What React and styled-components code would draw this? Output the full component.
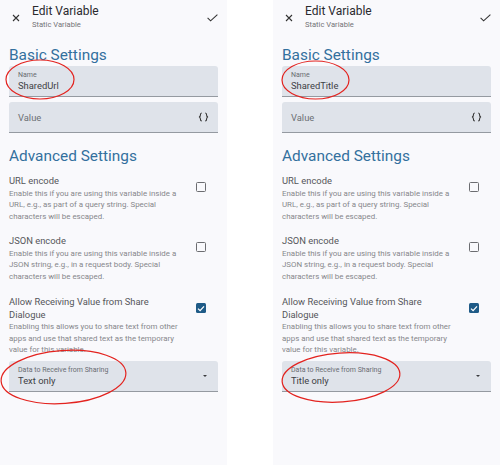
import React from 'react';
import styled, { createGlobalStyle } from 'styled-components';

const GlobalStyle = createGlobalStyle`
  body {
    margin: 0;
    background: #ffffff;
    font-family: Roboto, "Noto Sans", sans-serif;
  }
`;

const Page = styled.div`
  display: flex;
  justify-content: space-between;
  width: 500px;
  height: 465px;
  overflow: hidden;
`;

const Screen = styled.div`
  position: relative;
  width: 227px;
  height: 465px;
  box-sizing: border-box;
  padding: 0 9px;
  background: #f9f9fc;
  display: flex;
  flex-direction: column;
`;

const Header = styled.div`
  display: flex;
  align-items: center;
  height: 36px;
`;

const IconSlot = styled.div`
  display: flex;
  align-items: center;
  justify-content: center;
  width: ${(p) => p.$w}px;
  margin-left: ${(p) => p.$ml || 0}px;
`;

const TitleBlock = styled.div`
  flex: 1;
  display: flex;
  flex-direction: column;
  margin-left: 12px;
`;

const Title = styled.div`
  font-size: 12px;
  line-height: 14px;
  color: #2a2a2e;
`;

const Subtitle = styled.div`
  font-size: 7.6px;
  line-height: 14px;
  color: #737377;
`;

const Heading = styled.h2`
  margin: ${(p) => p.$mt}px 0 0;
  font-size: 15.4px;
  line-height: 20px;
  font-weight: 400;
  color: #33709e;
`;

const Field = styled.div`
  position: relative;
  display: flex;
  align-items: ${(p) => (p.$filled ? 'stretch' : 'center')};
  flex-direction: ${(p) => (p.$filled ? 'column' : 'row')};
  justify-content: ${(p) => (p.$filled ? 'flex-start' : 'space-between')};
  height: 31px;
  box-sizing: border-box;
  margin-top: ${(p) => p.$mt}px;
  padding: ${(p) => (p.$filled ? '5px 9px 0' : '0 9px')};
  background: #dfe3ea;
  border-bottom: 1px solid #959aa1;
  border-radius: 3px 3px 0 0;
`;

const FieldLabel = styled.div`
  font-size: 7px;
  line-height: 8px;
  color: #6a6d72;
`;

const FieldValue = styled.div`
  margin-top: 1px;
  font-size: 9.4px;
  line-height: 12px;
  color: ${(p) => (p.$placeholder ? '#6c6f74' : '#404145')};
`;

const DropArrow = styled.div`
  position: absolute;
  right: 11px;
  top: 14px;
  width: 0;
  height: 0;
  border-left: 2.5px solid transparent;
  border-right: 2.5px solid transparent;
  border-top: 2.6px solid #3a3b3e;
`;

const OptionRow = styled.div`
  display: flex;
  align-items: flex-start;
  justify-content: space-between;
  margin-top: ${(p) => p.$mt}px;
  padding-right: 12px;
`;

const OptionText = styled.div`
  display: flex;
  flex-direction: column;
`;

const OptionTitle = styled.div`
  font-size: 9.4px;
  line-height: 12.5px;
  color: #55565a;
  white-space: nowrap;
`;

const OptionLine = styled.div`
  font-size: 7.9px;
  line-height: 11.5px;
  color: #86878b;
  white-space: nowrap;
`;

const Box = styled.div`
  flex: none;
  width: 10px;
  height: 10px;
  box-sizing: border-box;
  margin-top: 7px;
  border-radius: 1.5px;
  border: ${(p) => (p.$checked ? 'none' : '1.3px solid #6c6d71')};
  background: ${(p) => (p.$checked ? '#1f5b87' : 'transparent')};
  display: flex;
  align-items: center;
  justify-content: center;
`;

const Marks = styled.svg`
  position: absolute;
  left: 0;
  top: 0;
  width: 227px;
  height: 465px;
  pointer-events: none;
  overflow: visible;
`;

const CloseIcon = () => (
  <svg width="8" height="8" viewBox="0 0 8 8">
    <path d="M1 1 L7 7 M7 1 L1 7" stroke="#333" strokeWidth="1.1" fill="none" />
  </svg>
);

const CheckIcon = () => (
  <svg width="11" height="8" viewBox="0 0 11 8">
    <path d="M0.6 3.9 L3.6 6.8 L10.4 0.6" stroke="#333" strokeWidth="1.1" fill="none" />
  </svg>
);

const BracesIcon = () => (
  <svg width="11" height="10" viewBox="0 0 11 10">
    <path
      d="M3.8 1 C2.4 1 2.4 2 2.4 3 C2.4 4.3 2 5 0.9 5 C2 5 2.4 5.7 2.4 7 C2.4 8 2.4 9 3.8 9 M7.2 1 C8.6 1 8.6 2 8.6 3 C8.6 4.3 9 5 10.1 5 C9 5 8.6 5.7 8.6 7 C8.6 8 8.6 9 7.2 9"
      stroke="#333"
      strokeWidth="1.1"
      fill="none"
    />
  </svg>
);

const TickIcon = () => (
  <svg width="8" height="7" viewBox="0 0 8 7">
    <path d="M1 3.6 L3.1 5.6 L7 1.4" stroke="#fff" strokeWidth="1.3" fill="none" />
  </svg>
);

const options = [
  {
    title: ['URL encode'],
    lines: [
      'Enable this if you are using this variable inside a',
      'URL, e.g., as part of a query string. Special',
      'characters will be escaped.',
    ],
    checked: false,
    mt: 9,
  },
  {
    title: ['JSON encode'],
    lines: [
      'Enable this if you are using this variable inside a',
      'JSON string, e.g., in a request body. Special',
      'characters will be escaped.',
    ],
    checked: false,
    mt: 13,
  },
  {
    title: ['Allow Receiving Value from Share', 'Dialogue'],
    lines: [
      'Enabling this allows you to share text from other',
      'apps and use that shared text as the temporary',
      'value for this variable.',
    ],
    checked: true,
    mt: 14,
  },
];

const EditScreen = ({ name, shareData, rings }) => (
  <Screen>
    <Header>
      <IconSlot $w={8} $ml={3}>
        <CloseIcon />
      </IconSlot>
      <TitleBlock>
        <Title>Edit Variable</Title>
        <Subtitle>Static Variable</Subtitle>
      </TitleBlock>
      <IconSlot $w={11}>
        <CheckIcon />
      </IconSlot>
    </Header>

    <Heading $mt={9}>Basic Settings</Heading>
    <Field $filled $mt={1}>
      <FieldLabel>Name</FieldLabel>
      <FieldValue>{name}</FieldValue>
    </Field>
    <Field $mt={5}>
      <FieldValue $placeholder>Value</FieldValue>
      <BracesIcon />
    </Field>

    <Heading $mt={13}>Advanced Settings</Heading>
    {options.map((o) => (
      <OptionRow key={o.title[0]} $mt={o.mt}>
        <OptionText>
          {o.title.map((t) => (
            <OptionTitle key={t}>{t}</OptionTitle>
          ))}
          {o.lines.map((l) => (
            <OptionLine key={l}>{l}</OptionLine>
          ))}
        </OptionText>
        <Box $checked={o.checked}>{o.checked && <TickIcon />}</Box>
      </OptionRow>
    ))}

    <Field $filled $mt={5}>
      <FieldLabel>Data to Receive from Sharing</FieldLabel>
      <FieldValue>{shareData}</FieldValue>
      <DropArrow />
    </Field>

    <Marks viewBox="0 0 227 465">
      {rings.map((r, i) => (
        <ellipse
          key={i}
          cx={r.cx}
          cy={r.cy}
          rx={r.rx}
          ry={r.ry}
          transform={`rotate(${r.rot} ${r.cx} ${r.cy})`}
          fill="none"
          stroke="#e3231f"
          strokeWidth="1.2"
        />
      ))}
    </Marks>
  </Screen>
);

const App = () => (
  <>
    <GlobalStyle />
    <Page>
      <EditScreen
        name="SharedUrl"
        shareData="Text only"
        rings={[
          { cx: 40, cy: 79.5, rx: 34, ry: 19.5, rot: 0 },
          { cx: 63.5, cy: 377, rx: 62.5, ry: 26.5, rot: -4 },
        ]}
      />
      <EditScreen
        name="SharedTitle"
        shareData="Title only"
        rings={[
          { cx: 42.5, cy: 80, rx: 33.5, ry: 19, rot: 0 },
          { cx: 68, cy: 377.5, rx: 59, ry: 24.5, rot: -4 },
        ]}
      />
    </Page>
  </>
);

export default App;
